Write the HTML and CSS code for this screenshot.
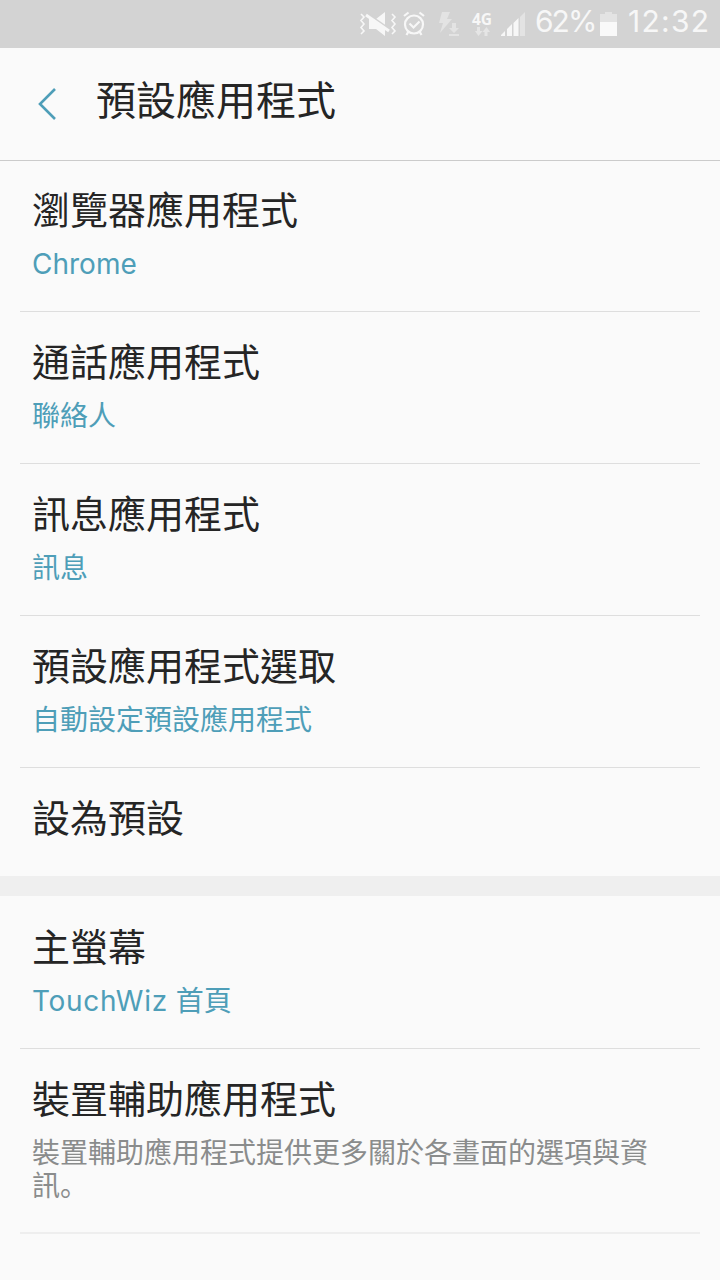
FILE: index.html
```html
<!DOCTYPE html>
<html lang="zh-Hant">
<head>
    <meta charset="UTF-8">
    <meta name="viewport" content="width=device-width, initial-scale=1.0">
    <title>預設應用程式</title>
    <link rel="stylesheet" href="styles.css">
</head>
<body>
    <div class="status-bar">
        <svg class="icon-mute" width="38" height="26" viewBox="0 0 38 26" fill="none" stroke="#f7f7f7" stroke-width="1.6">
            <path d="M2 3l3 3-3 3.500 3 3.500-3 3.500 3 3.500-3 3M33 3l3 3-3 3.500 3 3.500-3 3.500 3 3.500-3 3"/>
            <path d="M10 8h7l9-7v24l-9-7h-7z" fill="#f7f7f7" stroke="none"/>
            <path d="M9 3l23 16" stroke="#d3d3d3" stroke-width="2"/>
            <path d="M7 4l23 16" stroke-width="2.800"/>
        </svg>
        <svg class="icon-alarm" width="24" height="26" viewBox="0 0 24 26" fill="none" stroke="#f7f7f7" stroke-width="2.2">
            <circle cx="12" cy="13.500" r="9"/>
            <path d="M7.500 12.500l4 4 6-6M2 5l4.500-3.500M22 5l-4.500-3.500M6.500 20.500l-2 3.500M17.500 20.500l2 3.500"/>
        </svg>
        <svg class="icon-charge" width="21" height="26" viewBox="0 0 21 26" fill="#e3e3e3">
            <path d="M4 1h8L9 8h5L2 22l3-10H1z"/>
            <path d="M14 12h4v5h3l-5 5-5-5h3zM11 23h10v2H11z"/>
        </svg>
        <div class="network">
            <span>4G</span>
            <svg width="15" height="9" viewBox="0 0 15 9" fill="#e5e5e5">
                <path d="M2 0h3v4h2.500L3.500 9 0 4h2zM9.500 9h3V5H15L11.500 0 7.500 5h2z"/>
            </svg>
        </div>
        <svg class="icon-signal" width="25" height="24" viewBox="0 0 25 24" fill="#f7f7f7">
            <path d="M0 24v-1l4-4v5zM6 24v-7l5-5v12zM12.500 24V11l5-5v18z"/>
            <path d="M19 24V5l5-5v24z" fill="#e3e3e3"/>
        </svg>
        <span class="battery-level">62%</span>
        <svg class="icon-battery" width="17" height="24" viewBox="0 0 17 24">
            <path d="M0 2h5V0h7v2h5v9H0z" fill="#e3e3e3"/>
            <path d="M0 10h17v14H0z" fill="#f9f9f9"/>
        </svg>
        <span class="clock">12:32</span>
    </div>

    <header>
        <a href="#" class="back" aria-label="返回">
            <svg width="20" height="34" viewBox="0 0 20 34" fill="none" stroke="#4e9eb8" stroke-width="2.600">
                <path d="M18 2L3 17l15 15"/>
            </svg>
        </a>
        <h1>預設應用程式</h1>
    </header>

    <main>
        <ul class="settings">
            <li>
                <h2>瀏覽器應用程式</h2>
                <p>Chrome</p>
            </li>
            <li>
                <h2>通話應用程式</h2>
                <p>聯絡人</p>
            </li>
            <li>
                <h2>訊息應用程式</h2>
                <p>訊息</p>
            </li>
            <li>
                <h2>預設應用程式選取</h2>
                <p>自動設定預設應用程式</p>
            </li>
            <li class="single">
                <h2>設為預設</h2>
            </li>
        </ul>

        <ul class="settings second">
            <li>
                <h2>主螢幕</h2>
                <p><span class="launcher">TouchWiz</span> 首頁</p>
            </li>
            <li class="faint">
                <h2>裝置輔助應用程式</h2>
                <p class="description">裝置輔助應用程式提供更多關於各畫面的選項與資訊<span class="stop" lang="ja">。</span></p>
            </li>
        </ul>
    </main>
</body>
</html>
```

FILE: styles.css
```css
* {
    margin: 0;
    padding: 0;
    box-sizing: border-box;
}

body {
    font-family: Inter, 'Noto Sans CJK TC', sans-serif;
    background-color: #fafafa;
    color: #252525;
    min-height: 100vh;
}

.status-bar {
    display: flex;
    align-items: center;
    justify-content: flex-end;
    height: 48px;
    padding-right: 11px;
    background-color: #d3d3d3;
    color: #f7f7f7;
}

.icon-alarm {
    margin-left: 5px;
    margin-bottom: 1px;
}

.icon-charge {
    margin-left: 12px;
}

.network {
    display: flex;
    flex-direction: column;
    align-items: center;
    width: 20px;
    margin-left: 13px;
}

.network span {
    font: bold 15.5px/15px 'Noto Sans', sans-serif;
}

.icon-signal {
    margin-left: 9px;
}

.battery-level,
.clock {
    font-size: 30px;
    font-weight: 400;
    line-height: 42px;
    height: 48px;
}

.battery-level {
    width: 60px;
    margin-left: 9px;
    letter-spacing: -2px;
}

.icon-battery {
    margin-left: 5px;
}

.clock {
    width: 81px;
    margin-left: 11px;
    letter-spacing: 1.3px;
}

header {
    display: flex;
    align-items: center;
    height: 113px;
    padding-left: 37px;
    border-bottom: 1px solid #cbcbcb;
}

.back {
    display: flex;
    width: 59px;
}

h1 {
    font-size: 40px;
    font-weight: 400;
    line-height: 56px;
    margin-bottom: 6px;
}

.settings {
    list-style: none;
    margin-top: -1px;
}

.settings li {
    margin: 0 20px;
    padding: 24px 12px 30px;
    border-bottom: 1px solid #dedede;
}

.settings h2 {
    font-size: 38px;
    font-weight: 400;
    line-height: 52px;
}

.settings p {
    font-size: 28px;
    line-height: 33px;
    margin-top: 12px;
    color: #4e9eb8;
}

.settings .description {
    color: #8a8c8c;
}

.launcher {
    letter-spacing: 0.7px;
}

/* keeps the full stop in the lower left corner */
.stop {
    font-family: Inter, 'Noto Sans CJK JP', sans-serif;
}

.settings .single {
    padding-bottom: 32px;
    border-bottom: none;
}

.second {
    margin-top: 0;
    padding-top: 1px;
    border-top: 20px solid #efefef;
}

.settings .faint {
    padding-bottom: 29px;
    border-bottom: 2px solid #eeeeee;
}
```
